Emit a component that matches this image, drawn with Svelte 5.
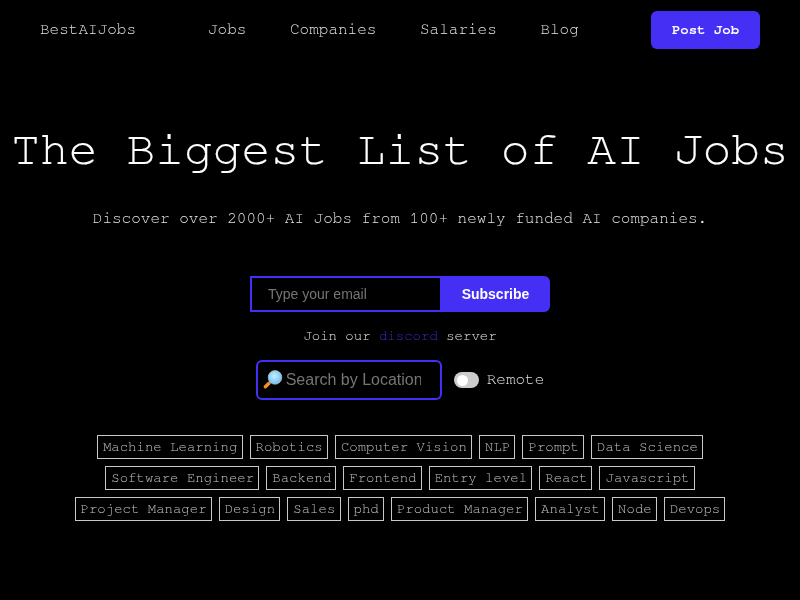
<script>
  const links = ['Jobs', 'Companies', 'Salaries', 'Blog'];
  const rows = [
    ['Machine Learning', 'Robotics', 'Computer Vision', 'NLP', 'Prompt', 'Data Science'],
    ['Software Engineer', 'Backend', 'Frontend', 'Entry level', 'React', 'Javascript'],
    ['Project Manager', 'Design', 'Sales', 'phd', 'Product Manager', 'Analyst', 'Node', 'Devops']
  ];
</script>

<div class="page">
  <header class="nav">
    <a class="brand" href="#top">BestAIJobs</a>
    <nav class="links">
      {#each links as l}<a href="#top">{l}</a>{/each}
    </nav>
    <button class="post">Post Job</button>
  </header>

  <main class="hero">
    <h1>The Biggest List of AI Jobs</h1>
    <p class="sub">Discover over 2000+ AI Jobs from 100+ newly funded AI companies.</p>

    <form class="subscribe">
      <input type="text" placeholder="Type your email" />
      <button type="button">Subscribe</button>
    </form>

    <p class="join">Join our <a href="#top">discord</a> server</p>

    <div class="filters">
      <div class="search">
        <svg class="lens" viewBox="0 0 20 20" width="20" height="20" aria-hidden="true">
          <defs>
            <radialGradient id="glass" cx="0.45" cy="0.4" r="0.65">
              <stop offset="0" stop-color="#c8edff" />
              <stop offset="1" stop-color="#62bdf0" />
            </radialGradient>
          </defs>
          <path d="M6 13.2 L2.4 16.8" stroke="#f7901e" stroke-width="3.4" stroke-linecap="round" />
          <path d="M8 11 L6 13" stroke="#8a8f94" stroke-width="2.4" />
          <circle cx="12" cy="7.4" r="6.8" fill="url(#glass)" stroke="#a9bcc7" stroke-width="0.8" />
        </svg>
        <input type="text" placeholder="Search by Location" />
      </div>
      <label class="remote">
        <span class="toggle"><span class="knob"></span></span>
        <span class="remote-label">Remote</span>
      </label>
    </div>

    <div class="tags">
      {#each rows as row}
        <div class="row">
          {#each row as t}<a class="tag" href="#top">{t}</a>{/each}
        </div>
      {/each}
    </div>
  </main>
</div>

<style>
  :global(body) {
    margin: 0;
    background: #000;
  }
  .page {
    width: 800px;
    height: 600px;
    overflow: hidden;
    color: #e4e4e4;
    font-family: FreeMono, "Liberation Mono", monospace;
    will-change: transform;
  }
  a {
    color: inherit;
    text-decoration: none;
  }
  .nav {
    display: flex;
    align-items: center;
    height: 38px;
    padding: 11px 40px 0;
  }
  .brand {
    font-size: 16px;
    color: #e4e4e4;
    width: 168px;
    margin-bottom: 2px;
  }
  .links {
    display: flex;
    gap: 43.6px;
    flex: 1;
    font-size: 16px;
    color: #e4e4e4;
    margin-bottom: 2px;
  }
  .post {
    width: 109px;
    height: 38px;
    border: 0;
    border-radius: 6px;
    background: #452ff4;
    color: #fff;
    font: bold 14px FreeMono, "Liberation Mono", monospace;
  }
  .hero {
    display: flex;
    flex-direction: column;
    align-items: center;
  }
  h1 {
    margin: 73px 0 0;
    font-size: 48px;
    line-height: 56px;
    font-weight: 400;
    color: #fff;
    white-space: nowrap;
    -webkit-text-stroke: 0.15px currentColor;
  }
  .sub {
    margin: 30px 0 0;
    font-size: 16px;
    line-height: 20px;
  }
  .subscribe {
    display: flex;
    width: 300px;
    height: 36px;
    margin-top: 48px;
  }
  .subscribe input {
    box-sizing: border-box;
    width: 190px;
    height: 36px;
    padding: 0 16px;
    border: 2px solid #452ff4;
    border-right: 0;
    border-radius: 0;
    outline: 0;
    background: #000;
    color: #fff;
    font: 14px "Liberation Sans", sans-serif;
  }
  .subscribe input::placeholder {
    color: #757575;
  }
  .subscribe button {
    flex: 1;
    padding: 0 0 0 1px;
    border: 0;
    border-radius: 0 6px 6px 0;
    background: #452ff4;
    color: #fff;
    font: bold 14px "Liberation Sans", sans-serif;
  }
  .join {
    margin: 16px 0 0;
    font-size: 14px;
    line-height: 16px;
  }
  .join a {
    color: #3a28d0;
  }
  .filters {
    display: flex;
    align-items: center;
    gap: 12px;
    margin-top: 16px;
  }
  .search {
    box-sizing: border-box;
    display: flex;
    align-items: center;
    width: 186px;
    height: 40px;
    padding: 0 19px 0 5px;
    border: 2px solid #452ff4;
    border-radius: 6px;
  }
  .lens {
    flex: none;
  }
  .search input {
    min-width: 0;
    flex: 1;
    padding: 0 0 0 3px;
    border: 0;
    outline: 0;
    background: transparent;
    font: 16px "Liberation Sans", sans-serif;
  }
  .search input::placeholder {
    color: #757575;
  }
  .remote {
    display: flex;
    align-items: center;
    gap: 8px;
    font-size: 16px;
    color: #e4e4e4;
  }
  .remote-label {
    margin-bottom: 2px;
  }
  .toggle {
    display: flex;
    align-items: center;
    width: 25px;
    height: 16px;
    padding-left: 3px;
    box-sizing: border-box;
    border-radius: 8px;
    background: #cccccc;
  }
  .knob {
    width: 11px;
    height: 11px;
    border-radius: 50%;
    background: #fff;
  }
  .tags {
    display: flex;
    flex-direction: column;
    align-items: center;
    gap: 7px;
    margin-top: 35px;
  }
  .row {
    display: flex;
    gap: 7px;
  }
  .tag {
    padding: 3px 4.2px 3px 5px;
    border: 1px solid #c8c8c8;
    font-size: 14px;
    line-height: 16px;
    color: #c4c4c4;
    white-space: nowrap;
  }
</style>
